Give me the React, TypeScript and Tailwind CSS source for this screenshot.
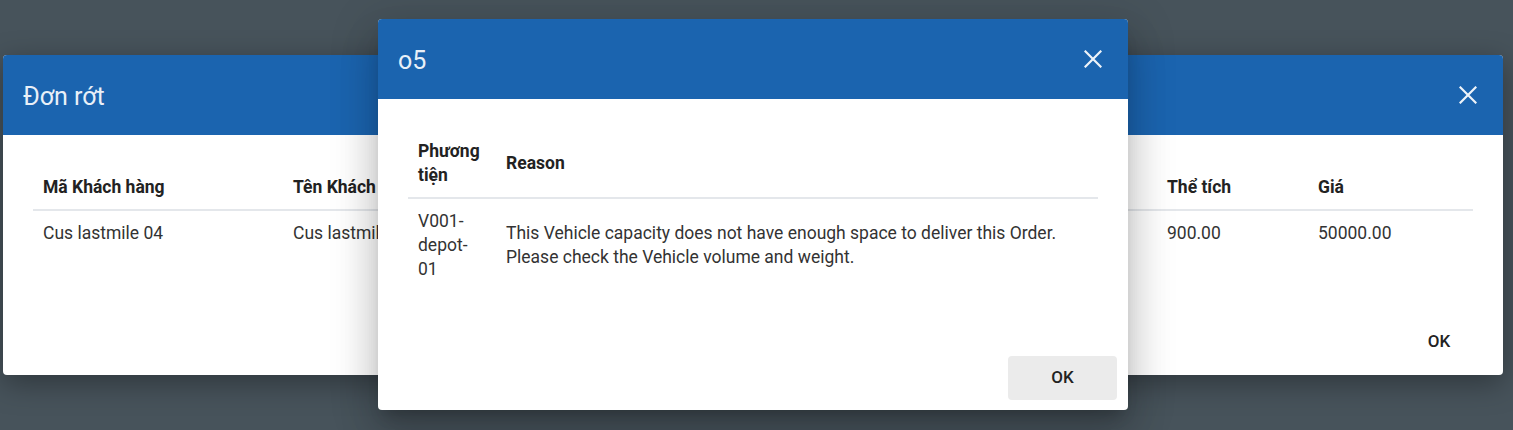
type Column = { label: string; width: string };

// the middle columns sit under the "o5" dialog and show nothing
const BACK_COLUMNS: Column[] = [
  { label: "Mã Khách hàng", width: "w-[250px]" },
  { label: "Tên Khách hàng", width: "w-[250px]" },
  { label: "", width: "w-[474px]" },
  { label: "", width: "w-[150px]" },
  { label: "Thể tích", width: "w-[151px]" },
  { label: "Giá", width: "" },
];

const BACK_ROW = ["Cus lastmile 04", "Cus lastmile 04", "", "", "900.00", "50000.00"];

function CloseIcon() {
  return (
    <svg viewBox="0 0 18 18" className="h-[18px] w-[18px]" fill="none" stroke="currentColor" strokeWidth="2.2" strokeLinecap="square" aria-hidden>
      <path d="M1.5 1.5l15 15M16.5 1.5l-15 15" />
    </svg>
  );
}

function DialogHeader({ title }: { title: string }) {
  return (
    <div className="flex h-[80px] shrink-0 items-center justify-between rounded-t-[4px] bg-[#1b64af] pl-[20px] pr-[26px] text-[#e9f0f8]">
      <h2 className="pt-[2px] text-[25px] font-normal leading-none">{title}</h2>
      <button type="button" className="flex items-center justify-center text-[#eef3f9]">
        <CloseIcon />
      </button>
    </div>
  );
}

function BackDialog() {
  return (
    <div className="absolute left-[3px] top-[55px] flex h-[320px] w-[1500px] flex-col rounded-[4px] bg-white shadow-[0_8px_30px_rgba(0,0,0,0.35)]">
      <DialogHeader title="Đơn rớt" />
      <div className="px-[30px] pt-[30px]">
        <table className="w-full border-collapse text-left text-[17.5px]">
          <thead>
            <tr className="border-b-2 border-[#e4e7eb]">
              {BACK_COLUMNS.map((c, i) => (
                <th key={i} className={`${c.width} px-[10px] py-[10px] align-middle font-bold leading-[24px] text-[#222]`}>
                  {c.label}
                </th>
              ))}
            </tr>
          </thead>
          <tbody>
            <tr>
              {BACK_ROW.map((v, i) => (
                <td key={i} className="h-[44px] px-[10px] py-[10px] leading-[24px] text-[#333]">
                  {v}
                </td>
              ))}
            </tr>
          </tbody>
        </table>
      </div>
      <div className="mt-auto flex justify-end pb-[15px] pr-[32px]">
        <button type="button" className="h-[36px] w-[64px] rounded-[4px] text-[17px] font-medium text-[#222]">
          OK
        </button>
      </div>
    </div>
  );
}

function FrontDialog() {
  return (
    <div className="absolute left-[378px] top-[19px] flex h-[391px] w-[750px] flex-col rounded-[4px] bg-white shadow-[0_11px_15px_-7px_rgba(0,0,0,0.2),0_24px_38px_3px_rgba(0,0,0,0.14),0_9px_46px_8px_rgba(0,0,0,0.12)]">
      <DialogHeader title="o5" />
      <div className="px-[30px] pt-[30px]">
        <table className="w-full border-collapse text-left text-[17.5px]">
          <thead>
            <tr className="border-b-2 border-[#e4e7eb]">
              <th className="w-[88px] px-[10px] py-[10px] align-middle font-bold leading-[24px] text-[#222]">Phương tiện</th>
              <th className="px-[10px] py-[10px] align-middle font-bold leading-[24px] text-[#222]">Reason</th>
            </tr>
          </thead>
          <tbody>
            <tr>
              <td className="w-[88px] px-[10px] py-[10px] align-middle leading-[24px] text-[#333]">V001-depot-01</td>
              <td className="px-[10px] py-[10px] align-middle leading-[24px] text-[#333]">
                This Vehicle capacity does not have enough space to deliver this Order. Please check the Vehicle volume and weight.
              </td>
            </tr>
          </tbody>
        </table>
      </div>
      <div className="mt-auto flex justify-end pb-[10px] pr-[11px]">
        <button type="button" className="h-[44px] w-[109px] rounded-[4px] bg-[#ebebeb] text-[17px] font-medium text-[#222]">
          OK
        </button>
      </div>
    </div>
  );
}

export default function App() {
  return (
    <div className="relative h-[430px] w-full overflow-hidden bg-[#47535b] font-['Roboto',sans-serif]">
      <BackDialog />
      <FrontDialog />
    </div>
  );
}
